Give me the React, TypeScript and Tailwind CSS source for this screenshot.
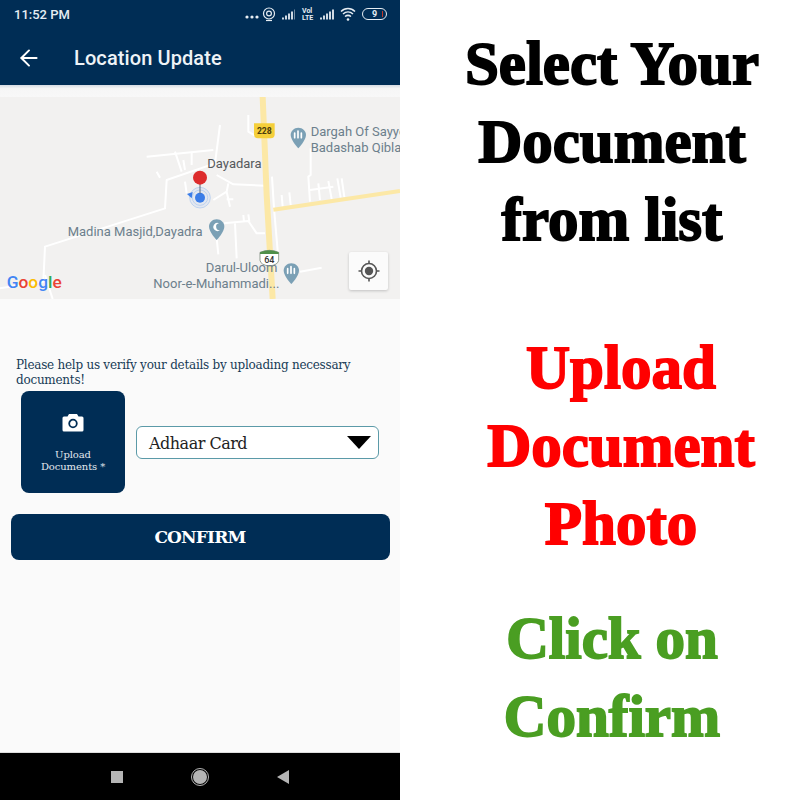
import { ArrowLeft } from "lucide-react";

const serif = { fontFamily: '"DejaVu Serif", serif' };

const StatusIcons = () => (
  <svg width="150" height="20" viewBox="0 0 150 20" className="text-[#e6edf3]">
    {/* dots */}
    <circle cx="9" cy="12" r="1.6" fill="currentColor" />
    <circle cx="14" cy="12" r="1.6" fill="currentColor" />
    <circle cx="19" cy="12" r="1.6" fill="currentColor" />
    {/* hotspot */}
    <circle cx="31" cy="8.5" r="5.5" fill="none" stroke="currentColor" strokeWidth="1.2" />
    <circle cx="31" cy="8.5" r="2.4" fill="none" stroke="currentColor" strokeWidth="1.2" />
    <path d="M28 15.5h6" stroke="currentColor" strokeWidth="1.2" />
    {/* signal 1 */}
    <path d="M45 14.500v-2M48 14.500v-4M51 14.500v-6M54 14.500v-8" stroke="currentColor" strokeWidth="1.8" />
    <path d="M56.500 14.500V4.500" stroke="currentColor" strokeWidth="0.8" opacity="0.6" />
    {/* volte */}
    <text x="64" y="8" fontSize="7" fontWeight="700" fill="currentColor" fontFamily="Roboto, sans-serif">Vol</text>
    <text x="64" y="15" fontSize="7" fontWeight="700" fill="currentColor" fontFamily="Roboto, sans-serif">LTE</text>
    {/* signal 2 */}
    <path d="M83 14.500v-2M86 14.500v-4M89 14.500v-6M92 14.500v-8M95 14.500V4.500" stroke="currentColor" strokeWidth="1.8" />
    {/* wifi */}
    <path d="M103 6.500c4-4 10-4 14 0M105 9c3-2.700 7-2.700 10 0M107 11.500c2-1.500 4-1.500 6 0" fill="none" stroke="currentColor" strokeWidth="1.5" />
    <circle cx="110" cy="14.500" r="1.300" fill="currentColor" />
  </svg>
);

const Battery = () => (
  <div className="relative w-[25px] h-[12px] rounded-full border border-[#e6edf3] flex items-center justify-center text-[9px] leading-none font-bold text-[#e6edf3]">
    9
    <span className="absolute right-[3px] top-[2px] h-[6px] w-px bg-[#c0392b]" />
  </div>
);

const MapView = () => (
  <div className="relative h-[202px] bg-[#f2f1f0] overflow-hidden">
    <svg viewBox="0 6 1200 606" className="w-full h-full block">
      <g fill="none" stroke="#ffffff" strokeWidth="6" strokeLinejoin="round">
        <path d="M0 580L130 560L135 455L495 340L500 255L645 205L660 90" />
        <path d="M135 540L158 612" />
        <path d="M440 185L640 165" />
        <path d="M525 170L545 230M550 195L555 225M575 170L575 210" />
        <path d="M470 230L480 248" />
        <path d="M745 60L745 110L770 125" />
        <path d="M650 240L700 268L795 272" />
        <path d="M685 265L680 290L640 315M680 290L690 335M680 313L700 313" />
        <path d="M555 260L560 295" />
        <path d="M672 385L745 378L770 415L795 415" />
        <path d="M730 360L732 380M745 358L748 380" />
        <path d="M705 385L710 490M650 430L655 478" />
        <path d="M932 160L932 240L925 245L930 320" />
        <path d="M930 285L1000 275M955 265L960 315M985 258L995 312M1012 250L1022 308M1025 250L1033 306" />
        <path d="M816 245L822 340L835 490M845 300L848 335M868 292L872 330" />
        <path d="M900 530L965 518" />
      </g>
      {/* highways */}
      <path d="M788 6L800 300L818 612" fill="none" stroke="#fce8a6" strokeWidth="18" />
      <path d="M820 344L1200 288" fill="none" stroke="#fce8a6" strokeWidth="12" />
      {/* route shields */}
      <path d="M762 85H824V118Q824 130 812 130H774Q762 130 762 118Z" fill="#f5cf3a" />
      <text x="793" y="118" textAnchor="middle" fontSize="26" fontWeight="700" fill="#4a3c0c" fontFamily="Roboto, sans-serif">228</text>
      <path d="M780 472Q808 460 836 472L836 496Q834 510 808 513Q782 510 780 496Z" fill="#ffffff" stroke="#5f6f5f" strokeWidth="2" />
      <path d="M780 472Q808 460 836 472L836 477H780Z" fill="#4f8f4a" />
      <text x="808" y="503" textAnchor="middle" fontSize="27" fontWeight="500" fill="#333" fontFamily="Roboto, sans-serif">64</text>
      {/* labels */}
      <g fontFamily="Roboto, sans-serif" fontSize="39" fill="#6c7f8c">
        <text x="932" y="124">Dargah Of Sayye</text>
        <text x="932" y="170">Badashab Qibla</text>
        <text x="203" y="423">Madina Masjid,Dayadra</text>
        <text x="617" y="531">Darul-Uloom</text>
        <text x="460" y="578">Noor-e-Muhammadi...</text>
      </g>
      <text x="622" y="219" fontFamily="Roboto, sans-serif" fontSize="39" fill="#55595c">Dayadara</text>
      {/* poi pins */}
      <g fill="#7ba0b5">
        <path d="M895 98C882 98 872 108 872 120C872 136 895 160 895 160C895 160 918 136 918 120C918 108 908 98 895 98Z" />
        <path d="M650 373C637 373 627 383 627 395C627 411 650 435 650 435C650 435 673 411 673 395C673 383 663 373 650 373Z" />
        <path d="M874 505C861 505 851 515 851 527C851 543 874 567 874 567C874 567 897 543 897 527C897 515 887 505 874 505Z" />
      </g>
      <path d="M884 128V114M894 128V108M904 128V114" stroke="#fff" strokeWidth="5" strokeLinecap="round" />
      <path d="M863 535V521M873 535V515M883 535V521" stroke="#fff" strokeWidth="5" strokeLinecap="round" />
      <path d="M657 385A12 12 0 1 0 660 405A10 10 0 1 1 657 385Z" fill="#fff" />
      {/* location dot and marker */}
      <circle cx="600" cy="308" r="31" fill="#4285f4" fillOpacity="0.08" stroke="#a9c5ee" strokeWidth="2" />
      <circle cx="600" cy="308" r="23" fill="none" stroke="#a9c5ee" strokeWidth="2" />
      <circle cx="600" cy="308" r="15" fill="#3b7de8" />
      <path d="M561 297L578 291L575 310Z" fill="#3b7de8" />
      <path d="M600 260V296" stroke="#5a6a7a" strokeWidth="3" />
      <circle cx="600" cy="248" r="21" fill="#dd2c2c" />
      {/* google logo */}
      <g fontFamily="Roboto, sans-serif" fontSize="52" fontWeight="500">
        <text x="20" y="578">
          <tspan fill="#4285f4">G</tspan>
          <tspan fill="#ea4335">o</tspan>
          <tspan fill="#fbbc05">o</tspan>
          <tspan fill="#4285f4">g</tspan>
          <tspan fill="#34a853">l</tspan>
          <tspan fill="#ea4335">e</tspan>
        </text>
      </g>
    </svg>
    {/* my location button */}
    <button className="absolute left-[349px] top-[155px] w-[39px] h-[38px] bg-[#fbfbfb] rounded-[2px] shadow-[0_1px_3px_rgba(0,0,0,0.2)] flex items-center justify-center">
      <svg width="24" height="24" viewBox="0 0 24 24" fill="none" stroke="#555" strokeWidth="1.6">
        <circle cx="12" cy="12" r="7.500" />
        <circle cx="12" cy="12" r="4.200" fill="#555" stroke="none" />
        <path d="M12 1.500v3M12 19.500v3M1.500 12h3M19.500 12h3" />
      </svg>
    </button>
  </div>
);

export default function App() {
  return (
    <div className="w-[800px] h-[800px] flex bg-white overflow-hidden">
      {/* phone */}
      <div className="w-[400px] h-full flex flex-col bg-[#fafafa]">
        <div className="h-[85px] bg-[#002d55] shrink-0" style={{ fontFamily: "Roboto, sans-serif" }}>
          <div className="h-[30px] flex items-center justify-between pl-[14px] pr-[13px]">
            <span className="text-[13px] font-medium text-[#e6edf3]">11:52 PM</span>
            <div className="relative w-[149px] h-5">
              <StatusIcons />
              <div className="absolute right-0 top-[3px]">
                <Battery />
              </div>
            </div>
          </div>
          <div className="h-[55px] flex items-center pl-[16px]">
            <ArrowLeft size={26} strokeWidth={1.8} className="text-white" />
            <span className="ml-[32px] text-[20px] font-medium tracking-[0.1px] text-[#eef3f7]">Location Update</span>
          </div>
        </div>
        <div className="h-3 shrink-0 bg-gradient-to-b from-[#d5dbe3] via-[#f6f6f6] via-30% to-[#f8f8f8]" />
        <MapView />
        <div className="flex-1 flex flex-col" style={serif}>
          <p className="mt-[59px] pl-[16px] pr-[20px] text-[12px] tracking-[-0.25px] leading-[14.500px] text-[#173a56]">
            Please help us verify your details by uploading necessary documents!
          </p>
          <div className="mt-[4px] flex items-center pl-[21px]">
            <div className="w-[104px] h-[102px] rounded-[8px] bg-[#002d55] flex flex-col items-center text-white">
              <svg width="22" height="20" viewBox="0 0 22 20" className="mt-[22px]">
                <path d="M7 1h8l1.500 2.500H20a1.500 1.500 0 0 1 1.500 1.500v12a1.500 1.500 0 0 1-1.500 1.500H2A1.500 1.500 0 0 1 .5 17V5A1.500 1.500 0 0 1 2 3.500h3.500Z" fill="#fff" />
                <circle cx="11" cy="10.500" r="3.800" fill="none" stroke="#002d55" strokeWidth="1.800" />
              </svg>
              <span className="mt-[16px] text-[10px] tracking-[-0.1px] leading-[12px] text-center text-[#e3e9ee]">
                Upload
                <br />
                Documents *
              </span>
            </div>
            <div className="ml-[11px] w-[243px] h-[33px] rounded-[6px] border-[1.5px] border-[#5b9aa8] bg-white flex items-center justify-between pl-[12px] pr-[7px]">
              <span className="pt-[3px] text-[16px] tracking-[-0.5px] text-[#222]">Adhaar Card</span>
              <svg width="24" height="13" viewBox="0 0 24 13"><path d="M0 0H24L12 13Z" fill="#000" /></svg>
            </div>
          </div>
          <button className="mt-[21px] mx-[10.500px] h-[46px] pt-[2px] rounded-[8px] bg-[#002d55] text-white text-[17px] tracking-[-0.8px] font-bold">
            CONFIRM
          </button>
        </div>
        {/* nav bar */}
        <div className="h-[48px] shrink-0 bg-black flex items-center justify-center gap-[68px] border-t border-[#ddd] pr-px">
          <span className="w-3 h-3 bg-[#b5b5b5]" />
          <span className="w-[18px] h-[18px] rounded-full border border-[#b5b5b5] flex items-center justify-center">
            <span className="w-[14px] h-[14px] rounded-full bg-[#b5b5b5]" />
          </span>
          <svg width="12" height="14" viewBox="0 0 12 14"><path d="M12 0V14L0 7Z" fill="#b5b5b5" /></svg>
        </div>
      </div>
      {/* captions */}
      <div className="w-[400px] h-full flex flex-col pt-[25px] text-[61px] leading-[78px] font-bold text-center [-webkit-text-stroke:1.8px_currentColor]" style={{ fontFamily: '"Liberation Serif", serif' }}>
        <p className="pl-[24px] text-black">
          Select Your
          <br />
          Document
          <br />
          from list
        </p>
        <p className="mt-[70px] pl-[42px] text-[#ff0000]">
          Upload
          <br />
          Document
          <br />
          Photo
        </p>
        <p className="mt-[36px] pl-[24px] text-[59px] text-[#4a9e22]">
          Click on
          <br />
          Confirm
        </p>
      </div>
    </div>
  );
}
